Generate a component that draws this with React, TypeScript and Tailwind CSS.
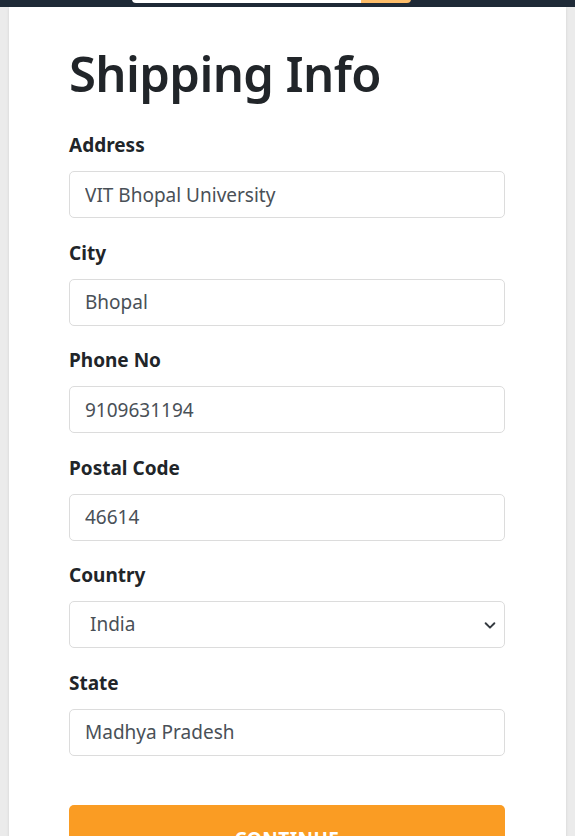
import React, { useState } from "react";

const fields = [
  { label: "Address", value: "VIT Bhopal University" },
  { label: "City", value: "Bhopal" },
  { label: "Phone No", value: "9109631194" },
  { label: "Postal Code", value: "46614" },
];

const App: React.FC = () => {
  const [country, setCountry] = useState("IN");

  return (
    <div
      className="min-h-screen bg-[#ebebeb]"
      style={{ fontFamily: '"Noto Sans", "Open Sans", sans-serif' }}
    >
      <nav className="h-[7px] bg-[#1f2a37] overflow-hidden">
        <div className="flex -mt-[37px] ml-[132px] w-[279px] h-[40px]">
          <div className="flex-1 bg-white rounded-l-[4px]" />
          <div className="w-[50px] bg-[#febd69] rounded-r-[4px]" />
        </div>
      </nav>

      <div className="mx-[9px] bg-white min-h-[829px] shadow-sm">
        <form className="ml-[60px] w-[436px] pt-[36px]" onSubmit={(e) => e.preventDefault()}>
          <h1 className="text-[49px] leading-[60px] text-[#212529] font-semibold mb-[29px] tracking-[-0.6px]">
            Shipping Info
          </h1>

          {fields.map((f) => (
            <div key={f.label} className="mb-[21.5px]">
              <label className="block text-[19px] leading-[26px] font-bold text-[#212529] mb-[13px]">
                {f.label}
              </label>
              <input
                type="text"
                defaultValue={f.value}
                className="w-full h-[47px] px-[15px] text-[19px] text-[#495057] border border-[#dcdcdc] rounded-[5px] outline-none"
                style={{ fontFamily: "inherit" }}
              />
            </div>
          ))}

          <div className="mb-[21.5px]">
            <label className="block text-[19px] leading-[26px] font-bold text-[#212529] mb-[13px]">
              Country
            </label>
            <div className="relative">
              <select
                value={country}
                onChange={(e) => setCountry(e.target.value)}
                className="w-full h-[47px] pl-[20px] pr-[40px] text-[19px] text-[#495057] border border-[#dcdcdc] rounded-[5px] outline-none appearance-none bg-white"
                style={{ fontFamily: "inherit" }}
              >
                <option value="IN">India</option>
                <option value="US">United States</option>
              </select>
              <svg
                className="absolute right-[8px] top-[17px] pointer-events-none"
                width="14"
                height="14"
                viewBox="0 0 16 16"
                fill="none"
                stroke="#343a40"
                strokeWidth="2.2"
                strokeLinecap="round"
                strokeLinejoin="round"
              >
                <path d="M3 6l5 5 5-5" />
              </svg>
            </div>
          </div>

          <div className="mb-[49px]">
            <label className="block text-[19px] leading-[26px] font-bold text-[#212529] mb-[13px]">
              State
            </label>
            <input
              type="text"
              defaultValue="Madhya Pradesh"
              className="w-full h-[47px] px-[15px] text-[19px] text-[#495057] border border-[#dcdcdc] rounded-[5px] outline-none"
              style={{ fontFamily: "inherit" }}
            />
          </div>

          <button
            type="submit"
            className="w-full h-[70px] bg-[#fa9c23] text-white text-[19px] font-bold rounded-[5px] tracking-wide"
          >
            CONTINUE
          </button>
        </form>
      </div>
    </div>
  );
};

export default App;
